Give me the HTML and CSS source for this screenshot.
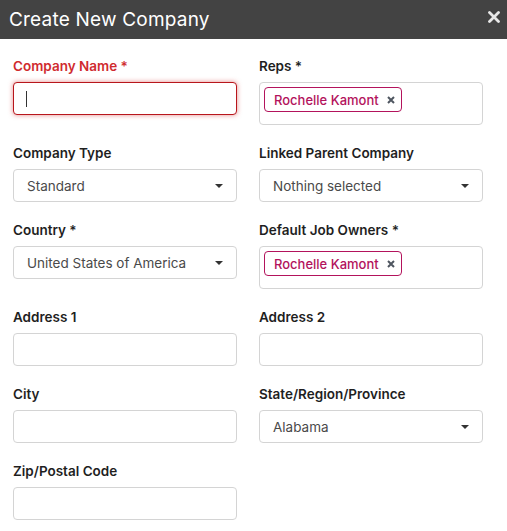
FILE: index.html
```html
<!DOCTYPE html>
<html lang="en">
<head>
    <meta charset="UTF-8">
    <meta name="viewport" content="width=device-width, initial-scale=1.0">
    <title>Create New Company</title>
    <link rel="stylesheet" href="styles.css">
</head>
<body>
    <div class="modal">
        <div class="modal-header">
            <h2>Create New Company</h2>
            <svg class="close" width="12" height="12" viewBox="0 0 12 12">
                <path d="M1.5 1.5 L10.5 10.5 M10.5 1.5 L1.5 10.5" stroke="currentColor" stroke-width="2.8" stroke-linecap="round"/>
            </svg>
        </div>

        <div class="modal-body">
            <div class="field has-error">
                <label>Company Name *</label>
                <div class="box focused"><span class="cursor"></span></div>
            </div>
            <div class="field">
                <label>Reps *</label>
                <div class="box multi">
                    <span class="chip">Rochelle Kamont
                        <svg class="chip-x" width="8" height="8" viewBox="0 0 8 8"><path d="M1 1 L7 7 M7 1 L1 7" stroke="currentColor" stroke-width="2"/></svg>
                    </span>
                </div>
            </div>

            <div class="field">
                <label>Company Type</label>
                <div class="box select"><span>Standard</span><span class="arrow"></span></div>
            </div>
            <div class="field">
                <label>Linked Parent Company</label>
                <div class="box select"><span>Nothing selected</span><span class="arrow"></span></div>
            </div>

            <div class="field">
                <label>Country *</label>
                <div class="box select"><span>United States of America</span><span class="arrow"></span></div>
            </div>
            <div class="field">
                <label>Default Job Owners *</label>
                <div class="box multi">
                    <span class="chip">Rochelle Kamont
                        <svg class="chip-x" width="8" height="8" viewBox="0 0 8 8"><path d="M1 1 L7 7 M7 1 L1 7" stroke="currentColor" stroke-width="2"/></svg>
                    </span>
                </div>
            </div>

            <div class="field">
                <label>Address 1</label>
                <div class="box"></div>
            </div>
            <div class="field">
                <label>Address 2</label>
                <div class="box"></div>
            </div>

            <div class="field">
                <label>City</label>
                <div class="box"></div>
            </div>
            <div class="field">
                <label>State/Region/Province</label>
                <div class="box select"><span>Alabama</span><span class="arrow"></span></div>
            </div>

            <div class="field">
                <label>Zip/Postal Code</label>
                <div class="box"></div>
            </div>
        </div>
    </div>
</body>
</html>
```

FILE: styles.css
```css
body {
    margin: 0;
    font-family: Inter, "Open Sans", sans-serif;
    background-color: #fff;
    color: #222;
}

.modal {
    width: 507px;
}

.modal-header {
    display: flex;
    align-items: center;
    justify-content: space-between;
    height: 39px;
    padding: 0 7px 0 9px;
    box-sizing: border-box;
    background-color: #434343;
}

.modal-header h2 {
    margin: 0;
    font-size: 19px;
    font-weight: 400;
    color: #fff;
    letter-spacing: 0.2px;
}

.close {
    color: #e8e8e8;
    margin-top: -5px;
}

.modal-body {
    display: grid;
    grid-template-columns: 224px 224px;
    column-gap: 22px;
    padding: 17px 24px 0 13px;
}

.field {
    margin-bottom: 18px;
}

.field label {
    display: block;
    font-size: 13.5px;
    font-weight: 600;
    line-height: 20px;
    margin-bottom: 6px;
    color: #1f1f1f;
}

.has-error label {
    color: #d02b2f;
}

.box {
    height: 33px;
    box-sizing: border-box;
    border: 1px solid #d4d4d4;
    border-radius: 4px;
    background-color: #fff;
}

.focused {
    border-color: #b8161c;
    box-shadow: 0 0 5px rgba(210, 40, 40, 0.55);
    display: flex;
    align-items: center;
    padding-left: 12px;
}

.cursor {
    width: 1px;
    height: 16px;
    background-color: #333;
}

.select {
    display: flex;
    align-items: center;
    justify-content: space-between;
    padding: 0 13px 0 13px;
    font-size: 13.5px;
    color: #4a4a4a;
}

.arrow {
    width: 0;
    height: 0;
    border-left: 4px solid transparent;
    border-right: 4px solid transparent;
    border-top: 4px solid #333;
}

.multi {
    height: 43px;
    padding: 4px;
}

.chip {
    display: inline-flex;
    align-items: center;
    height: 25px;
    box-sizing: border-box;
    padding: 0 6px 0 9px;
    border: 1px solid #b3135c;
    border-radius: 4px;
    font-size: 13px;
    font-weight: 500;
    color: #b3135c;
}

.chip-x {
    margin-left: 8px;
    color: #4f5660;
}
```
